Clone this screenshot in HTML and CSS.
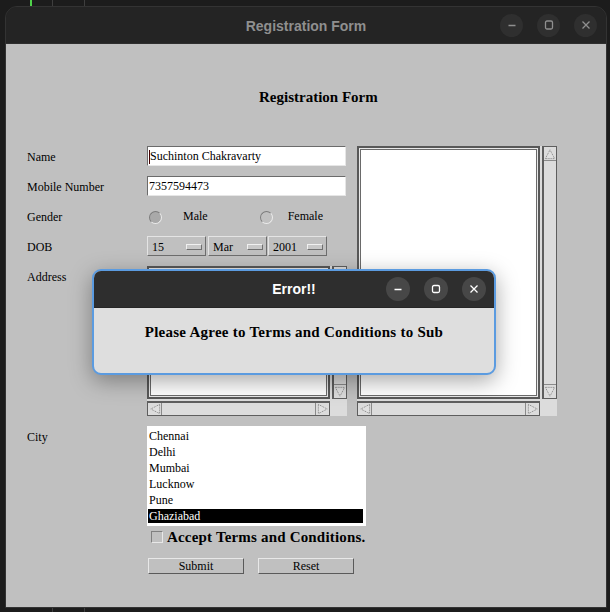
FILE: index.html
```html
<!DOCTYPE html>
<html>
<head>
<meta charset="utf-8">
<title>Registration Form</title>
<link rel="stylesheet" href="styles.css">
</head>
<body>
<div class="topstrip"><span class="tl green"></span><span class="tl g1"></span><span class="tl g2"></span></div>
<div class="window">
  <div class="titlebar">
    <div class="title">Registration Form</div>
    <div class="wbtns">
      <span class="wbtn"><svg viewBox="0 0 16 16"><path d="M4.5 8.5h7"/></svg></span>
      <span class="wbtn"><svg viewBox="0 0 16 16"><rect x="4.5" y="4" width="7" height="8" rx="1.5"/></svg></span>
      <span class="wbtn"><svg viewBox="0 0 16 16"><path d="M4.5 4.5l7 7M11.5 4.5l-7 7"/></svg></span>
    </div>
  </div>
  <div class="content">
    <h1 class="heading">Registration Form</h1>
    <div class="form">
      <div class="lbl r1">Name</div>
      <div class="tf r1"><span class="caret"></span>Suchinton Chakravarty</div>

      <div class="lbl r2">Mobile Number</div>
      <div class="tf r2">7357594473</div>

      <div class="lbl r3">Gender</div>
      <div class="gender r3">
        <span class="radio on"></span><span class="rlabel">Male</span>
        <span class="radio off"></span><span class="rlabel">Female</span>
      </div>

      <div class="lbl r4">DOB</div>
      <div class="dob r4">
        <div class="sel"><span>15</span><i class="ind"></i></div>
        <div class="sel"><span>Mar</span><i class="ind"></i></div>
        <div class="sel"><span>2001</span><i class="ind"></i></div>
      </div>

      <div class="lbl r5">Address</div>
      <div class="pane pane-left r5">
        <div class="ta"></div>
        <div class="vsb">
          <span class="arr up"><svg viewBox="0 0 13 13"><path d="M1.5 11.5L6.5 2l5 9.5z"/></svg></span>
          <span class="track"></span>
          <span class="arr down"><svg viewBox="0 0 13 13"><path d="M1.5 1.5L6.5 11l5-9.5z"/></svg></span>
        </div>
        <div class="hsb">
          <span class="arr left"><svg viewBox="0 0 13 13"><path d="M11.5 1.5L2 6.5l9.5 5z"/></svg></span>
          <span class="track"></span>
          <span class="arr right"><svg viewBox="0 0 13 13"><path d="M1.5 1.5L11 6.5l-9.5 5z"/></svg></span>
        </div>
      </div>

      <div class="pane pane-right">
        <div class="ta"></div>
        <div class="vsb">
          <span class="arr up"><svg viewBox="0 0 13 13"><path d="M1.5 11.5L6.5 2l5 9.5z"/></svg></span>
          <span class="track"></span>
          <span class="arr down"><svg viewBox="0 0 13 13"><path d="M1.5 1.5L6.5 11l5-9.5z"/></svg></span>
        </div>
        <div class="hsb">
          <span class="arr left"><svg viewBox="0 0 13 13"><path d="M11.5 1.5L2 6.5l9.5 5z"/></svg></span>
          <span class="track"></span>
          <span class="arr right"><svg viewBox="0 0 13 13"><path d="M1.5 1.5L11 6.5l-9.5 5z"/></svg></span>
        </div>
      </div>

      <div class="lbl r6">City</div>
      <ul class="list r6">
        <li>Chennai</li>
        <li>Delhi</li>
        <li>Mumbai</li>
        <li>Lucknow</li>
        <li>Pune</li>
        <li class="selected">Ghaziabad</li>
      </ul>
    </div>

    <div class="terms">
      <span class="cbox"></span>
      <span class="terms-text">Accept Terms and Conditions.</span>
    </div>

    <div class="actions">
      <button class="btn">Submit</button>
      <button class="btn">Reset</button>
    </div>

    <div class="dialog">
      <div class="dtitlebar">
        <div class="dtitle">Error!!</div>
        <div class="dbtns">
          <span class="dbtn"><svg viewBox="0 0 16 16"><path d="M4.5 8.5h7"/></svg></span>
          <span class="dbtn"><svg viewBox="0 0 16 16"><rect x="4.5" y="4.5" width="7" height="7" rx="1.5"/></svg></span>
          <span class="dbtn"><svg viewBox="0 0 16 16"><path d="M4.5 4.5l7 7M11.5 4.5l-7 7"/></svg></span>
        </div>
      </div>
      <div class="dbody">Please Agree to Terms and Conditions to Sub</div>
    </div>
  </div>
</div>
<div class="bottomstrip"><span class="tl g1"></span><span class="tl g2"></span></div>
</body>
</html>
```

FILE: styles.css
```css
* { box-sizing: border-box; margin: 0; padding: 0; }
html, body { background: #1c1c1c; }
body {
  width: 610px;
  height: 612px;
  overflow: hidden;
  font-family: "Liberation Serif", "Times New Roman", serif;
  color: #000;
}

/* terminal remnants */
.topstrip, .bottomstrip { height: 6px; display: flex; }
.bottomstrip { height: 4px; }
.tl { height: 100%; }
.tl.green { width: 2px; background: #4fd14a; margin-left: 30px; }
.tl.g1 { width: 1px; background: #3e3e3e; margin-left: 20px; }
.bottomstrip .tl.g1 { margin-left: 52px; }
.tl.g2 { width: 1px; background: #3e3e3e; margin-left: 31px; }

/* main window */
.window {
  width: 602px;
  margin-left: 5px;
  border: 1px solid #333;
  border-radius: 12px 12px 0 0;
  overflow: hidden;
  background: #242424;
}
.titlebar {
  height: 37px;
  display: grid;
  grid-template-columns: 1fr auto 1fr;
  align-items: center;
  background: #242424;
  border-bottom: 1px solid #2e2e2e;
}
.title {
  grid-column: 2;
  font: bold 14px "Liberation Sans", Arial, sans-serif;
  color: #8f8f8f;
  padding-top: 1px;
}
.wbtns {
  grid-column: 3;
  justify-self: end;
  display: flex;
  gap: 14px;
  padding-right: 9px;
}
.wbtn {
  width: 23px; height: 23px;
  border-radius: 50%;
  background: #2f2f2f;
  display: flex; align-items: center; justify-content: center;
}
.wbtn svg { width: 16px; height: 16px; stroke: #8f8f8f; fill: none; stroke-width: 1.3; }

.content {
  position: relative;
  height: 563px;
  background: #c0c0c0;
  padding: 44px 0 0 21px;
}
.heading {
  font: bold 15px/18px "Liberation Serif", serif;
  margin-left: 232px;
}

/* form grid */
.form {
  margin-top: 40px;
  display: grid;
  grid-template-columns: 120px 210px 200px;
  grid-template-rows: 20px 20px 20px 20px 150px 100px;
  row-gap: 10px;
  font-size: 12px;
}
.r1 { grid-row: 1; } .r2 { grid-row: 2; } .r3 { grid-row: 3; }
.r4 { grid-row: 4; } .r5 { grid-row: 5; } .r6 { grid-row: 6; }
.lbl { grid-column: 1; line-height: 14px; padding-top: 4px; }

.tf {
  grid-column: 2;
  width: 199px;
  height: 20px;
  background: #fff;
  border: 1px solid;
  border-color: #6b6b6b #e6e6e6 #e6e6e6 #6b6b6b;
  line-height: 17px;
  padding-left: 1px;
  padding-top: 1px;
  display: flex;
  align-items: center;
}
.caret { width: 1px; height: 14px; background: #400; }

.gender { grid-column: 2; display: flex; align-items: center; }
.radio {
  width: 13px; height: 13px;
  border-radius: 50%;
  border: 1px solid;
  border-color: #7c7c7c #ececec #ececec #7c7c7c;
  margin-top: 3px;
}
.radio.on { background: #a9a9a9; margin-left: 2px; }
.radio.off { background: #c0c0c0; margin-left: 52px; }
.rlabel { line-height: 14px; margin-left: 21px; margin-top: 0; }
.radio.off + .rlabel { margin-left: 15px; }

.dob { grid-column: 2; display: flex; gap: 1px; }
.sel {
  width: 59px; height: 20px;
  border: 1px solid;
  border-color: #e4e4e4 #6e6e6e #6e6e6e #e4e4e4;
  display: flex; align-items: center; justify-content: space-between;
  padding: 1px 3px 0 4px;
  line-height: 14px;
}
.sel:nth-child(2) { margin-left: 1px; }
.ind {
  width: 16px; height: 6px;
  border: 1px solid;
  border-color: #f0f0f0 #707070 #707070 #f0f0f0;
  background: #c8c8c8;
}

/* scroll panes */
.pane {
  display: grid;
  grid-template-columns: 1fr 15px;
  grid-template-rows: 1fr 15px;
  gap: 2px;
  background: #dcdcdc;
}
.pane-left { grid-column: 2; width: 200px; }
.pane-right { grid-column: 3; grid-row: 1 / 6; width: 200px; }
.ta {
  background: #fff;
  border: 2px solid #585858;
  box-shadow: inset 0 0 0 1px #e8e8e8, inset 0 0 0 2px #6a6a6a;
}
.vsb, .hsb {
  display: flex;
  background: #dcdcdc;
  border: 1px solid #5e5e5e;
}
.vsb { flex-direction: column; border-left-width: 2px; }
.hsb { border-top-width: 2px; }
.track { flex: 1; }
.arr { display: flex; align-items: center; justify-content: center; }
.vsb .arr { height: 14px; }
.hsb .arr { width: 14px; }
.vsb .up { border-bottom: 1px solid #8a8a8a; }
.vsb .down { border-top: 1px solid #8a8a8a; }
.hsb .left { border-right: 1px solid #8a8a8a; }
.hsb .right { border-left: 1px solid #8a8a8a; }
.arr svg { width: 12px; height: 12px; fill: #e0e0e0; stroke: #7a7a7a; stroke-width: 1; stroke-dasharray: 1 1; }

/* list */
.list {
  grid-column: 2 / 4;
  width: 219px;
  background: #fff;
  list-style: none;
  padding: 3px 3px 0 1px;
}
.list li { height: 14px; line-height: 15px; margin-bottom: 2px; padding-left: 1px; }
.list li.selected { background: #000; color: #fff; }

/* terms */
.terms {
  display: flex;
  align-items: center;
  margin-top: 4px;
  margin-left: 124px;
  height: 13px;
}
.cbox {
  width: 12px; height: 12px;
  border: 1px solid;
  border-color: #808080 #e8e8e8 #e8e8e8 #808080;
  background: #c0c0c0;
}
.terms-text { font: bold 15px/14px "Liberation Serif", serif; margin-left: 4px; letter-spacing: 0.18px; }

.actions {
  display: flex;
  gap: 14px;
  margin-top: 15px;
  margin-left: 121px;
}
.btn {
  width: 96px; height: 16px;
  background: #c0c0c0;
  border: 1px solid;
  border-color: #e8e8e8 #5a5a5a #5a5a5a #e8e8e8;
  font: 12px/13px "Liberation Serif", serif;
  color: #000;
}

/* error dialog */
.dialog {
  position: absolute;
  left: 86px;
  top: 225px;
  width: 404px;
  height: 106px;
  border: 2px solid #5b9be0;
  border-radius: 9px;
  overflow: hidden;
  background: #dedede;
  box-shadow: 0 6px 22px rgba(0,0,0,0.35);
  display: flex;
  flex-direction: column;
}
.dtitlebar {
  height: 37px;
  background: #2e2e2e;
  border-bottom: 1px solid #262626;
  display: grid;
  grid-template-columns: 1fr auto 1fr;
  align-items: center;
}
.dtitle {
  grid-column: 2;
  font: bold 14px "Liberation Sans", Arial, sans-serif;
  color: #fff;
}
.dbtns {
  grid-column: 3;
  justify-self: end;
  display: flex;
  gap: 14px;
  padding-right: 8px;
}
.dbtn {
  width: 24px; height: 24px;
  border-radius: 50%;
  background: #474747;
  display: flex; align-items: center; justify-content: center;
}
.dbtn svg { width: 16px; height: 16px; stroke: #fff; fill: none; stroke-width: 1.3; }
.dbody {
  flex: 1;
  text-align: center;
  font: bold 15px/18px "Liberation Serif", serif;
  letter-spacing: 0.25px;
  padding-top: 15px;
}
```
